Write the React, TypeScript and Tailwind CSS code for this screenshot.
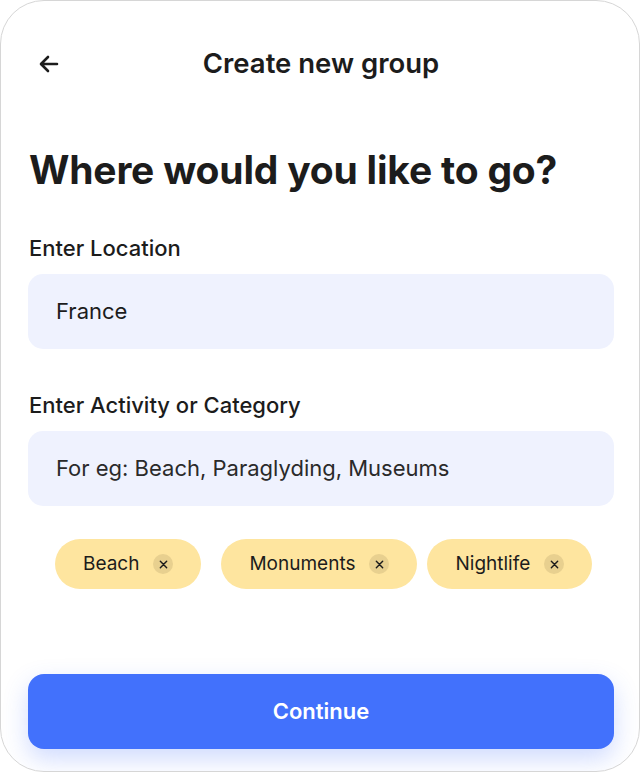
import React from "react";

const chips = ["Beach", "Monuments", "Nightlife"];

function Chip({ label, className = "" }: { label: string; className?: string }) {
  return (
    <div
      className={`flex h-[50px] items-center rounded-full bg-[#fee59f] pl-[28px] pr-[28px] ${className}`}
    >
      <span className="text-[19px] text-[#1c1c1c]">{label}</span>
      <span className="ml-[14px] flex h-[20px] w-[20px] items-center justify-center rounded-full bg-[#e8d08f]">
        <svg width="9" height="9" viewBox="0 0 10 10" fill="none">
          <path d="M1.5 1.5l7 7M8.5 1.5l-7 7" stroke="#1c1c1c" strokeWidth="1.6" strokeLinecap="round" />
        </svg>
      </span>
    </div>
  );
}

export default function App() {
  return (
    <div
      className="h-[772px] w-[640px] bg-white"
      style={{ fontFamily: "Inter, 'Noto Sans', sans-serif" }}
    >
      <div className="flex h-full w-full flex-col overflow-hidden rounded-[44px] border border-[#d6d6d6] bg-white pl-[27px] pr-[25px]">
        <div className="relative mt-[33px] flex h-[60px] items-center justify-center">
          <button className="absolute left-[9px] top-1/2 -translate-y-1/2">
            <svg width="24" height="24" viewBox="0 0 24 24" fill="none">
              <path
                d="M20 12H4.5M11 5l-7 7 7 7"
                stroke="#1c1c1c"
                strokeWidth="2.6"
                strokeLinecap="round"
                strokeLinejoin="round"
              />
            </svg>
          </button>
          <h1 className="text-[27.5px] font-semibold text-[#1c1c1c]">Create new group</h1>
        </div>

        <h2 className="mt-[52px] pl-[1px] text-[39px] font-bold leading-[48px] tracking-[-0.2px] text-[#1c1c1c]">
          Where would you like to go?
        </h2>

        <label className="mt-[40px] pl-[1px] text-[22px] font-medium leading-[28px] text-[#1c1c1c]">
          Enter Location
        </label>
        <div className="mt-[12px] flex h-[75px] items-center rounded-[15px] bg-[#eff2fe] px-[28px] text-[22px] text-[#1c1c1c]">
          France
        </div>

        <label className="mt-[42px] pl-[1px] text-[22px] font-medium leading-[28px] text-[#1c1c1c]">
          Enter Activity or Category
        </label>
        <div className="mt-[12px] flex h-[75px] items-center rounded-[15px] bg-[#eff2fe] px-[28px] text-[22px] text-[#2a2a2a]">
          For eg: Beach, Paraglyding, Museums
        </div>

        <div className="mt-[33px] flex pl-[27px]">
          <Chip label={chips[0]} />
          <Chip label={chips[1]} className="ml-[20px]" />
          <Chip label={chips[2]} className="ml-[10px]" />
        </div>

        <button className="mt-[85px] flex h-[75px] items-center justify-center rounded-[16px] bg-[#4271fc] text-[22px] font-semibold text-white shadow-[0_10px_24px_rgba(66,113,252,0.25)]">
          Continue
        </button>
      </div>
    </div>
  );
}
